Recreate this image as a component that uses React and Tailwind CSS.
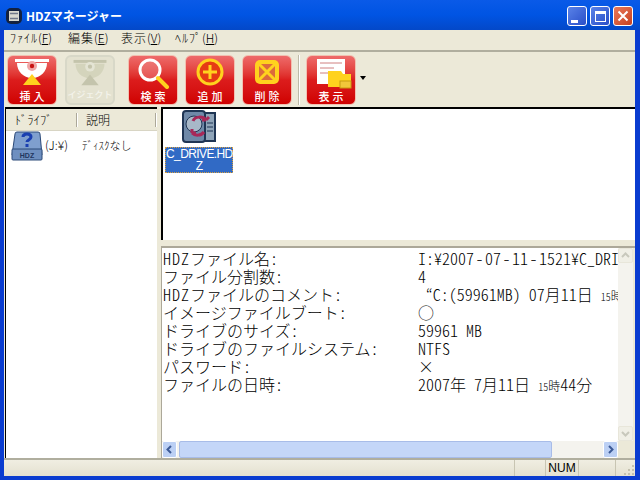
const JP = { fontFamily: '"Noto Sans CJK JP", sans-serif' };

function Disc({ muted }) {
  const a = muted ? '#d4d4bc' : '#ffffff';
  const b = muted ? '#e4e4d4' : '#f0a8a8';
  const c = muted ? '#c4c4ac' : '#ffd21e';
  const bar = muted ? '#c4c4ac' : '#ffffff';
  return (
    <svg width="36" height="31" viewBox="0 0 36 31">
      <rect x="1" y="1" width="34" height="3" fill={bar} />
      <path d="M3 5h30c0 8-6 15-15 15S3 13 3 5z" fill={a} />
      <circle cx="18" cy="8" r="5" fill={b} />
      <circle cx="18" cy="8" r="2.2" fill={muted ? '#c4c4ac' : '#c81414'} />
      <path d="M18 16l9 11H9z" fill={c} />
    </svg>
  );
}

function Search() {
  return (
    <svg width="36" height="31" viewBox="0 0 36 31">
      <circle cx="15" cy="12" r="10" fill="#f3a5a5" fillOpacity="0.35" stroke="#fff" strokeWidth="3" />
      <path d="M23 20l9 9" stroke="#ffd21e" strokeWidth="4" strokeLinecap="round" />
    </svg>
  );
}

function Add() {
  return (
    <svg width="36" height="31" viewBox="0 0 36 31">
      <circle cx="18" cy="14" r="12" fill="#e63a14" stroke="#ffd21e" strokeWidth="3" />
      <path d="M18 7v14M11 14h14" stroke="#ffd21e" strokeWidth="3" />
    </svg>
  );
}

function Del() {
  return (
    <svg width="36" height="31" viewBox="0 0 36 31">
      <rect x="6" y="2" width="24" height="24" rx="5" fill="#ffd21e" />
      <rect x="10" y="6" width="16" height="16" fill="#dc6a3c" />
      <path d="M10 6l16 16M26 6L10 22" stroke="#ffd21e" strokeWidth="3" />
    </svg>
  );
}

function View() {
  return (
    <svg width="42" height="31" viewBox="0 0 42 31">
      <rect x="7" y="1" width="28" height="25" fill="#fff" />
      <path d="M10 5h22M10 10h14M10 15h10" stroke="#d08080" strokeWidth="1" />
      <path d="M18 13h13l2 3h8v13H18z" fill="#ffd21e" />
      <rect x="30" y="23" width="11" height="7" fill="#f2c63a" stroke="#c89a10" strokeWidth="1" />
    </svg>
  );
}

function Btn({ icon, label, off }) {
  return (
    <div
      className={
        'flex h-[50px] w-[50px] flex-col items-center justify-between rounded-[6px] py-[2px] ' +
        (off
          ? 'border-2 border-[#d8d8c8] bg-[#e4e2d0]'
          : 'border border-[#f2c0b0] bg-gradient-to-b from-[#ee6a6a] via-[#dc1c1c] to-[#d00000]')
      }
    >
      {icon}
      <span
        className={
          'whitespace-nowrap leading-[12px] font-medium ' +
          (off ? 'text-[9px] tracking-normal text-[#f4f4ec]' : 'pl-[3px] text-[11px] tracking-[3px] text-white')
        }
        style={JP}
      >
        {label}
      </span>
    </div>
  );
}

function WinBtn({ red, children }) {
  return (
    <div
      className={
        'flex h-[20px] w-[20px] items-center justify-center rounded-[3px] border border-white ' +
        (red
          ? 'bg-gradient-to-br from-[#e8785a] to-[#c8401c]'
          : 'bg-gradient-to-br from-[#5a82e8] to-[#2a4ec8]')
      }
    >
      {children}
    </div>
  );
}

function Menu({ label, k, w }) {
  return (
    <span className={'text-[12px] font-light leading-[16px] text-black ' + w} style={JP}>
      <span className="tracking-[1px]">{label}</span>(<span className="underline">{k}</span>)
    </span>
  );
}

function Arrow({ d, color }) {
  return (
    <svg width="9" height="9" viewBox="0 0 9 9">
      <path d={d} fill="none" stroke={color} strokeWidth="2" />
    </svg>
  );
}

function H({ children }) {
  return <span className="[font-feature-settings:'hwid']">{children}</span>;
}

function Hdz() {
  return <span className="tracking-[1px] [font-feature-settings:'hwid']">HDZ</span>;
}

function Dash() {
  return <span className="px-[1.5px] [font-feature-settings:'hwid']">-</span>;
}

function Sp() {
  return <span className="whitespace-pre [font-feature-settings:'hwid']"> </span>;
}

function Small15() {
  return (
    <>
      <span className="text-[10px] [font-feature-settings:'hwid']">15</span>
      <span className="text-[12px]">時</span>
    </>
  );
}

const rows = [
  [<><Hdz />ファイル名<H>:</H></>, <><H>I:¥2007</H><Dash /><H>07</H><Dash /><H>11</H><Dash /><H>1521¥C_DRIVE.HDZ</H></>],
  [<>ファイル分割数<H>:</H></>, <H>4</H>],
  [<><Hdz />ファイルのコメント<H>:</H></>, <><Sp /><H>“C:(59961MB)</H><Sp /><H>07</H>月<H>11</H>日<Sp /><Small15 /><H>44</H>分</>],
  [<>イメージファイルブート<H>:</H></>, '○'],
  [<>ドライブのサイズ<H>:</H></>, <H>59961 MB</H>],
  [<>ドライブのファイルシステム<H>:</H></>, <H>NTFS</H>],
  [<>パスワード<H>:</H></>, '×'],
  [<>ファイルの日時<H>:</H></>, <><H>2007</H>年<Sp /><H>7</H>月<H>11</H>日<Sp /><Small15 /><H>44</H>分</>],
];

export default function App() {
  return (
    <div className="flex h-[480px] w-[640px] flex-col overflow-hidden bg-[#0a3cd0]">
      <div className="flex h-[30px] shrink-0 items-center bg-gradient-to-b from-[#0a5ae8] via-[#0054e3] to-[#0348c8] pl-[6px] pr-[7px] pt-[2px]">
        <svg width="16" height="16" viewBox="0 0 16 16" className="mr-[4px]">
          <rect x="0" y="0" width="16" height="16" rx="5" fill="#13213f" />
          <rect x="3" y="3" width="10" height="10" fill="#d8d8d0" />
          <path d="M4 5.5h8M4 10.5h8" stroke="#70788a" strokeWidth="1.5" />
        </svg>
        <span className="flex-1 text-[12px] font-bold leading-[16px] text-white" style={JP}>
          HDZマネージャー
        </span>
        <div className="flex gap-[3px]">
          <WinBtn>
            <div className="mr-[6px] mt-[10px] h-[3px] w-[7px] bg-white" />
          </WinBtn>
          <WinBtn>
            <div className="h-[11px] w-[11px] border border-t-[3px] border-white" />
          </WinBtn>
          <WinBtn red>
            <svg width="12" height="12" viewBox="0 0 12 12">
              <path d="M1.5 1.5l9 9M10.5 1.5l-9 9" stroke="#fff" strokeWidth="2" />
            </svg>
          </WinBtn>
        </div>
      </div>

      <div className="ml-[4px] mr-[5px] flex min-h-0 flex-1 flex-col bg-[#ece9d8]">
        <div className="flex h-[20px] shrink-0 items-start pl-[6px]">
          <Menu label="ﾌｧｲﾙ" k="F" w="w-[58px]" />
          <Menu label="編集" k="E" w="w-[53px]" />
          <Menu label="表示" k="V" w="w-[54px]" />
          <Menu label="ﾍﾙﾌﾟ" k="H" w="w-[50px]" />
        </div>

        <div className="flex h-[57px] shrink-0 items-center border-t-2 border-t-[#b0ae9e] pl-[3px]">
          <Btn icon={<Disc />} label="挿入" />
          <div className="w-[8px]" />
          <Btn icon={<Disc muted />} label="イジェクト" off />
          <div className="w-[13px]" />
          <Btn icon={<Search />} label="検索" />
          <div className="w-[7px]" />
          <Btn icon={<Add />} label="追加" />
          <div className="w-[7px]" />
          <Btn icon={<Del />} label="削除" />
          <div className="mx-[6px] h-[50px] w-[2px] border-l border-[#bdbaa8] bg-white" />
          <Btn icon={<View />} label="表示" />
          <div className="ml-[4px] mt-[-4px] h-0 w-0 border-x-[3px] border-t-[4px] border-x-transparent border-t-black" />
        </div>

        <div className="flex min-h-0 flex-1">
          <div className="ml-[1px] flex w-[152px] shrink-0 flex-col border-l border-t-2 border-l-black border-t-black bg-white">
            <div className="flex h-[22px] shrink-0 items-center border-b border-[#d8d5c4] bg-[#ece9d8] text-[12px] font-light text-black" style={JP}>
              <span className="w-[70px] pl-[9px] tracking-[0.4px]">ﾄﾞﾗｲﾌﾞ</span>
              <div className="h-[14px] w-[2px] border-l border-[#aca899] bg-white" />
              <span className="flex-1 pl-[8px]">説明</span>
              <div className="h-[14px] w-[2px] border-l border-[#aca899] bg-white" />
            </div>
            <div className="flex items-start pl-[5px]">
              <svg width="32" height="30" viewBox="0 0 32 30">
                <path d="M6 1h21q2 0 2 2l2 21H1L4 3q0-2 2-2z" fill="#7f9fce" stroke="#2c4a78" />
                <rect x="1" y="18" width="30" height="11" rx="1" fill="#6e8fc0" stroke="#2c4a78" />
                <path d="M12 6c0-4 8-4 8 0 0 3-4 3-4 5" fill="none" stroke="#1a3fb0" strokeWidth="3" />
                <rect x="14.5" y="13" width="3" height="3" fill="#1a3fb0" />
                <text x="16" y="27" textAnchor="middle" fontSize="7" fontWeight="700" fill="#22365e" fontFamily="Liberation Sans">HDZ</text>
              </svg>
              <span className="ml-[2px] mt-[5px] w-[37px] text-[12px] font-light text-black" style={JP}>(J:¥)</span>
              <span className="mt-[6px] text-[11px] font-light text-black" style={JP}>ﾃﾞｨｽｸなし</span>
            </div>
          </div>

          <div className="flex min-w-0 flex-1 flex-col pl-[4px]">
            <div className="flex h-[133px] shrink-0 flex-col items-start border-l-2 border-t-2 border-l-black border-t-black bg-white pl-[2px]">
              <div className="flex w-[68px] flex-col items-center">
                <svg width="36" height="36" viewBox="0 0 36 36">
                  <rect x="12" y="4" width="22" height="28" fill="#8fa4b8" stroke="#1f3554" strokeWidth="2" />
                  <rect x="2" y="2" width="22" height="31" rx="3" fill="#6f89a8" stroke="#1f3554" strokeWidth="2" />
                  <circle cx="13" cy="15" r="8" fill="#a8b8c8" stroke="#1f3554" />
                  <path d="M12 12c2-5 10-5 13-1m0 0l3-3m-3 3l-4 0M23 23c-3 4-9 4-12 1m0 0v-4m0 4h4" fill="none" stroke="#a82858" strokeWidth="3" />
                  <path d="M26 14h6M26 18h6M26 22h6" stroke="#1f3554" />
                </svg>
                <div
                  className="mt-[2px] w-[68px] whitespace-nowrap border border-dotted border-[#d8a040] bg-[#316ac5] text-center text-[12px] leading-[12px] tracking-[-0.6px] text-white"
                  style={{ fontFamily: '"Liberation Sans", sans-serif' }}
                >
                  C_DRIVE.HD
                  <br />
                  Z
                </div>
              </div>
            </div>
            <div className="h-[6px] shrink-0" />
            <div className="flex min-h-0 flex-1 flex-col border-l border-t-2 border-l-[#aca899] border-t-[#aca899] bg-white">
              <div className="flex min-h-0 flex-1">
                <div className="min-w-0 flex-1 overflow-hidden pt-[1px] font-light" style={JP}>
                  {rows.map(([k, v], i) => (
                    <div key={i} className="flex h-[18px] whitespace-nowrap text-[16px] leading-[18px] text-black">
                      <span className="w-[256px] shrink-0 pl-[1px]">{k}</span>
                      <span>{v}</span>
                    </div>
                  ))}
                </div>
                <div className="flex w-[15px] shrink-0 flex-col justify-between bg-[#f4f3ee]">
                  <div className="flex h-[15px] items-center justify-center rounded-[2px] border border-[#e8e6da] bg-[#f0efe6]">
                    <Arrow d="M1 6l3.5-3.5L8 6" color="#c8c8bc" />
                  </div>
                  <div className="flex h-[15px] items-center justify-center rounded-[2px] border border-[#e8e6da] bg-[#f0efe6]">
                    <Arrow d="M1 3l3.5 3.5L8 3" color="#c8c8bc" />
                  </div>
                </div>
                <div className="w-[2px] shrink-0 bg-[#ece9d8]" />
              </div>
              <div className="flex h-[17px] shrink-0 items-stretch bg-[#f4f3ee]">
                <div className="flex w-[15px] items-center justify-center rounded-[2px] border border-white bg-[#bcd0f4]">
                  <Arrow d="M6 1L2.5 4.5 6 8" color="#3c5a96" />
                </div>
                <div className="ml-[2px] w-[373px] rounded-[2px] border border-[#a8bce8] bg-[#c4d6f8]" />
                <div className="flex-1" />
                <div className="flex w-[15px] items-center justify-center rounded-[2px] border border-white bg-[#bcd0f4]">
                  <Arrow d="M3 1l3.5 3.5L3 8" color="#3c5a96" />
                </div>
                <div className="w-[17px] bg-[#ece9d8]" />
              </div>
            </div>
          </div>
        </div>

        <div className="flex h-[18px] shrink-0 items-center border-t-2 border-t-[#b0ae9e] bg-gradient-to-b from-[#f0eee2] to-[#e4e1d0] text-[12px] text-black">
          <div className="h-full w-[511px] border-r border-[#c8c5b2]" />
          <div className="h-full w-[31px] border-r border-[#c8c5b2]" />
          <div className="flex h-full w-[33px] items-center justify-center border-r border-[#c8c5b2]" style={{ fontFamily: '"Liberation Sans", sans-serif' }}>NUM</div>
          <div className="h-full w-[37px] border-r border-[#c8c5b2]" />
          <div className="flex h-full flex-1 items-end justify-end">
            <svg width="12" height="12" viewBox="0 0 12 12">
              <path d="M9 1h2v2H9zM5 5h2v2H5zM9 5h2v2H9zM1 9h2v2H1zM5 9h2v2H5zM9 9h2v2H9z" fill="#c4c1ae" />
            </svg>
          </div>
        </div>
      </div>
      <div className="h-[4px] shrink-0" />
    </div>
  );
}
